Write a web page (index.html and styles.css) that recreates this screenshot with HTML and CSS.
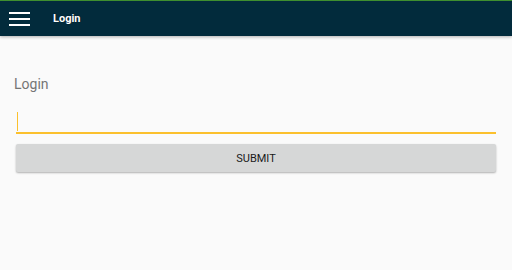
FILE: index.html
```html
<!DOCTYPE html>
<html>
<head>
<meta charset="utf-8">
<link rel="stylesheet" href="styles.css">
</head>
<body>
<header class="topbar">
  <div class="menu-btn">
    <span class="bar"></span><span class="bar"></span><span class="bar"></span>
  </div>
  <div class="title">Login</div>
</header>
<main class="content">
  <div class="label">Login</div>
  <div class="field"><span class="caret"></span></div>
  <button class="submit">SUBMIT</button>
</main>
</body>
</html>
```
FILE: styles.css
```css
html, body {
  margin: 0;
  padding: 0;
  background: #fafafa;
  font-family: Roboto, "Liberation Sans", sans-serif;
  width: 512px;
  height: 270px;
  overflow: hidden;
}
.topbar {
  height: 35px;
  background: #022b3c;
  border-top: 1px solid #3f8f2f;
  display: flex;
  align-items: center;
  box-shadow: 0 1px 3px rgba(0,0,0,0.3);
  position: relative;
}
.menu-btn {
  margin-left: 9px;
  width: 21px;
  display: flex;
  flex-direction: column;
  gap: 4px;
  margin-top: 1px;
}
.bar {
  display: block;
  height: 2px;
  background: #fff;
}
.title {
  margin-left: 23px;
  color: #fff;
  font-weight: bold;
  font-size: 11px;
  text-shadow: 0 0 1px rgba(0,0,0,0.6);
}
.content {
  padding: 40px 16px 0 16px;
}
.label {
  color: #757575;
  font-size: 14px;
  margin-left: -2px;
  line-height: 16px;
}
.field {
  margin-top: 20px;
  height: 20px;
  border-bottom: 2px solid #fbc02d;
  position: relative;
}
.caret {
  position: absolute;
  left: 1px;
  top: 0;
  width: 1px;
  height: 19px;
  background: #fbc02d;
}
.submit {
  display: block;
  margin-top: 10px;
  width: 480px;
  height: 28px;
  background: #d6d7d7;
  border: none;
  border-radius: 2px;
  box-shadow: 0 1px 2px rgba(0,0,0,0.3);
  font-family: Roboto, "Liberation Sans", sans-serif;
  font-size: 11px;
  color: #1a1a1a;
  padding: 0;
}
```
